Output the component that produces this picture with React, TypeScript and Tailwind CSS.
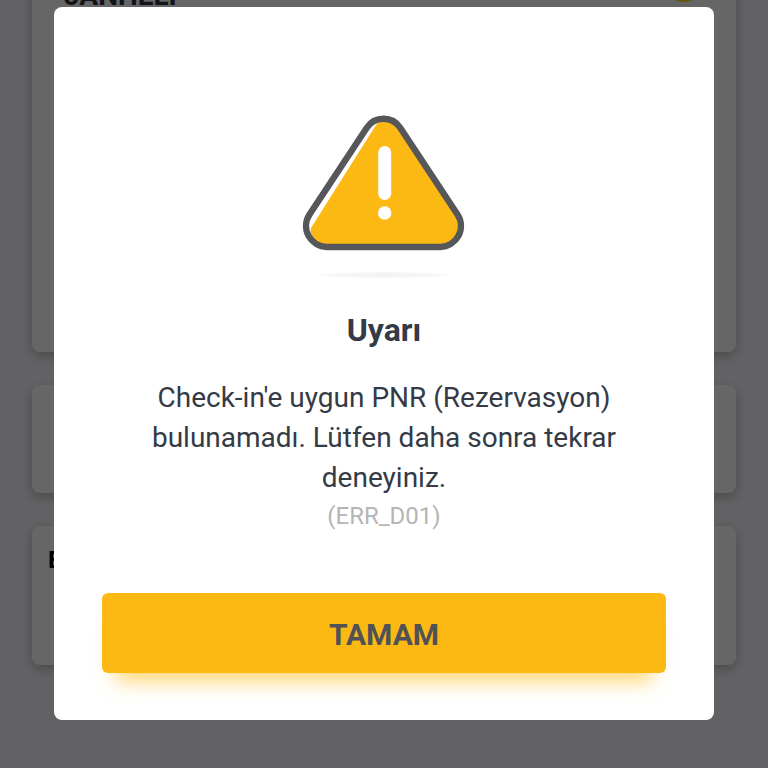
import React from "react";

function WarningIcon() {
  return (
    <svg
      viewBox="0 0 168 172"
      className="h-[172px] w-[168px]"
      aria-hidden="true"
      fill="none"
    >
      <defs>
        <radialGradient id="ground">
          <stop offset="0" stopColor="#f1f1f1" />
          <stop offset="1" stopColor="#f9f9f9" />
        </radialGradient>
      </defs>
      <path
        d="M76 17C82 10 94 11 100 20L157.500 106.500A21 21 0 0 1 140.300 138H27C17 138 9 128 11 120Z"
        fill="#fdb913"
      />
      <path
        d="M66.800 19.700A20 20 0 0 1 100.200 19.700L157.500 106.500A21 21 0 0 1 140.300 139H26.700A21 21 0 0 1 9.500 106.500Z"
        stroke="#56575a"
        strokeWidth="6.400"
      />
      <path d="M84.700 44.500V85.500" stroke="#fff" strokeWidth="13" strokeLinecap="round" />
      <circle cx="84.700" cy="105" r="6.700" fill="#fff" />
      <ellipse cx="84" cy="167" rx="65" ry="3" fill="url(#ground)" />
    </svg>
  );
}

export default function App() {
  return (
    <div className="relative h-screen overflow-hidden bg-[#f4f6f9] font-[Roboto,sans-serif]">
      <main className="-mt-16 flex flex-col gap-[33px] px-8" aria-hidden="true">
        <section className="flex h-[416px] items-start justify-between rounded-lg bg-white px-8 pt-[26px] shadow-[0_4px_12px_rgba(0,0,0,0.25)]">
          <h1 className="pt-[18px] text-[28px] leading-8 font-bold text-[#30333c]">JANHELİ</h1>
          <span className="h-10 w-10 rounded-full bg-[#fdd913]" />
        </section>
        <section className="h-[108px] rounded-lg bg-white shadow-[0_4px_12px_rgba(0,0,0,0.25)]" />
        <section className="h-[139px] rounded-lg bg-white px-4 pt-[18px] shadow-[0_4px_12px_rgba(0,0,0,0.25)]">
          <h2 className="text-2xl leading-8 font-bold text-black">E</h2>
        </section>
      </main>

      <div className="absolute inset-0 flex items-start justify-center bg-black/60 px-[54px] pt-[7px]">
        <div
          role="alertdialog"
          aria-modal="true"
          aria-labelledby="alert-title"
          aria-describedby="alert-text"
          className="flex w-full flex-col items-center rounded-lg bg-white px-12 pt-[101px] pb-[47px] text-center"
        >
          <WarningIcon />
          <h2 id="alert-title" className="mt-8 text-[32px] leading-9 font-bold text-[#343a46]">
            Uyarı
          </h2>
          <div id="alert-text" className="mt-[30px] px-12">
            <p className="text-[28px] leading-10 text-[#343a46]">
              Check-in'e uygun PNR (Rezervasyon) bulunamadı. Lütfen daha sonra tekrar deneyiniz.
            </p>
            <p className="text-2xl leading-9 text-[#b5b5b5]">(ERR_D01)</p>
          </div>
          <button
            type="button"
            className="mt-[59px] h-20 w-full rounded-md bg-[#fdb913] pt-0.5 text-[30px] font-bold text-[#505257] shadow-[0_22px_20px_-14px_rgba(253,185,19,0.6)]"
          >
            TAMAM
          </button>
        </div>
      </div>
    </div>
  );
}
